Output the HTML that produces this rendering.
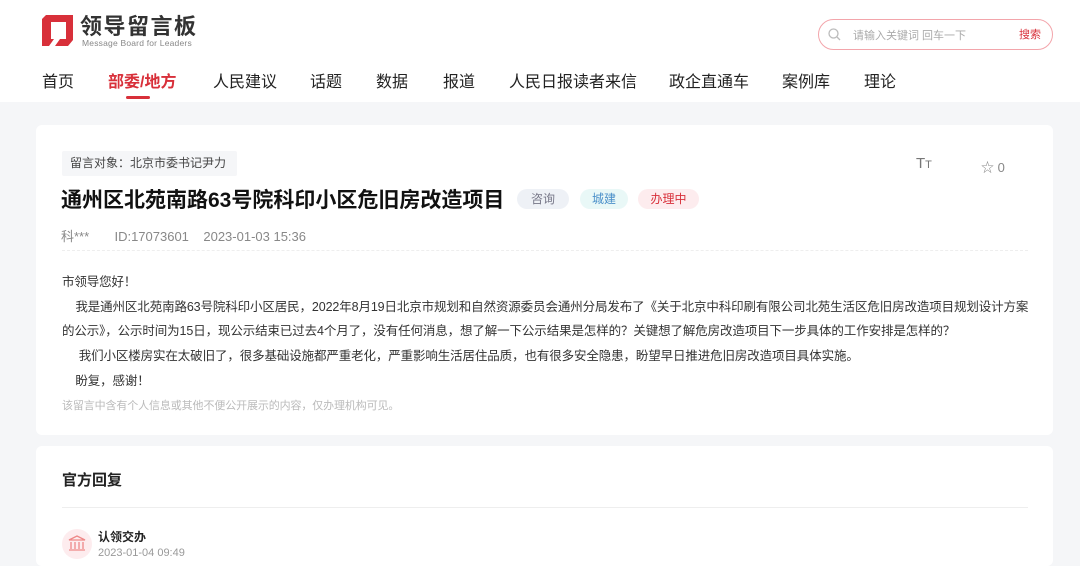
<!DOCTYPE html>
<html><head><meta charset="utf-8"><style>
*{margin:0;padding:0;box-sizing:border-box}
body{width:1080px;height:552px;overflow:hidden;background:#f5f6f8;font-family:"Liberation Sans","Noto Sans CJK SC",sans-serif;color:#333;position:relative}
.hdr{position:absolute;left:0;top:0;width:1080px;height:102px;background:#fff}
.a{position:absolute;white-space:nowrap}
.nav span{position:absolute;top:68px;font-size:16px;color:#222}
.card{position:absolute;left:36px;width:1017px;background:#fff;border-radius:6px}
.tag{position:absolute;top:189px;height:20px;border-radius:10px;font-size:12px;line-height:20px;text-align:center}
.p{position:absolute;left:62px;font-size:12.5px;color:#333;white-space:nowrap;letter-spacing:-0.12px}
</style></head><body>
<div class="hdr">
 <svg class="a" style="left:42px;top:15px" width="32" height="31" viewBox="0 0 32 31"><path d="M4 0H31V25L26 31H13L18 24H24V7H9V24H12L7 31H0V4Z" fill="#d8303a"/></svg>
 <div class="a" style="left:80px;top:9px;font-size:22px;font-weight:bold;color:#333;letter-spacing:1.5px">领导留言板</div>
 <div class="a" style="left:82px;top:38px;font-size:8.5px;color:#888;letter-spacing:0.2px">Message Board for Leaders</div>
 <div class="nav">
  <span style="left:42px">首页</span>
  <span style="left:108px;color:#d8303a;font-weight:bold">部委/地方</span>
  <span style="left:213px">人民建议</span>
  <span style="left:310px">话题</span>
  <span style="left:376px">数据</span>
  <span style="left:443px">报道</span>
  <span style="left:509px">人民日报读者来信</span>
  <span style="left:669px">政企直通车</span>
  <span style="left:782px">案例库</span>
  <span style="left:864px">理论</span>
 </div>
 <div class="a" style="left:126px;top:96px;width:24px;height:3px;background:#d8303a;border-radius:2px"></div>
 <div class="a" style="left:818px;top:19px;width:235px;height:31px;border:1px solid #f3a5ab;border-radius:16px"></div>
 <svg class="a" style="left:828px;top:28px" width="13" height="13" viewBox="0 0 13 13"><circle cx="5.5" cy="5.5" r="4.5" fill="none" stroke="#bbb" stroke-width="1.3"/><path d="M9 9L12 12" stroke="#bbb" stroke-width="1.3"/></svg>
 <div class="a" style="left:853px;top:27px;font-size:11px;color:#aaa">请输入关键词 回车一下</div>
 <div class="a" style="left:1019px;top:26px;font-size:11px;color:#d8303a">搜索</div>
</div>
<div class="card" style="top:125px;height:310px"></div>
<div class="a" style="left:62px;top:151px;width:175px;height:25px;background:#f5f6f8;border-radius:2px;font-size:12px;line-height:25px;padding-left:8px;color:#444">留言对象：北京市委书记尹力</div>
<div class="a" style="left:916px;top:155px;font-size:15px;color:#777">T<span style="font-size:11px">T</span></div>
<div class="a" style="left:981px;top:157px;font-size:13px;color:#888">☆ 0</div>
<div class="a" style="left:61px;top:184px;font-size:21px;font-weight:bold;color:#111">通州区北苑南路63号院科印小区危旧房改造项目</div>
<div class="tag" style="left:517px;width:52px;background:#eef1f6;color:#778">咨询</div>
<div class="tag" style="left:580px;width:48px;background:#e9f8f7;color:#4a8fc9">城建</div>
<div class="tag" style="left:638px;width:61px;background:#fdecee;color:#d8303a">办理中</div>
<div class="a" style="left:61px;top:226px;font-size:13px;color:#888">科***&nbsp;&nbsp;&nbsp;&nbsp;&nbsp;&nbsp;&nbsp;ID:17073601&nbsp;&nbsp;&nbsp;&nbsp;2023-01-03 15:36</div>
<div class="a" style="left:62px;top:250px;width:966px;border-top:1px dashed #eee"></div>
<div class="p" style="top:271px">市领导您好！</div>
<div class="p" style="top:296px">&nbsp;&nbsp;&nbsp;&nbsp;我是通州区北苑南路63号院科印小区居民，2022年8月19日北京市规划和自然资源委员会通州分局发布了《关于北京中科印刷有限公司北苑生活区危旧房改造项目规划设计方案</div>
<div class="p" style="top:320px">的公示》，公示时间为15日，现公示结束已过去4个月了，没有任何消息，想了解一下公示结果是怎样的？关键想了解危房改造项目下一步具体的工作安排是怎样的？</div>
<div class="p" style="top:345px">&nbsp;&nbsp;&nbsp;&nbsp;&nbsp;我们小区楼房实在太破旧了，很多基础设施都严重老化，严重影响生活居住品质，也有很多安全隐患，盼望早日推进危旧房改造项目具体实施。</div>
<div class="p" style="top:370px">&nbsp;&nbsp;&nbsp;&nbsp;盼复，感谢！</div>
<div class="p" style="top:397px;font-size:11px;color:#bbb">该留言中含有个人信息或其他不便公开展示的内容，仅办理机构可见。</div>
<div class="card" style="top:446px;height:120px"></div>
<div class="a" style="left:62px;top:469px;font-size:15px;font-weight:bold;color:#222">官方回复</div>
<div class="a" style="left:62px;top:507px;width:966px;border-top:1px solid #eee"></div>
<div class="a" style="left:62px;top:529px;width:30px;height:30px;border-radius:15px;background:#fdecee"></div>
<svg class="a" style="left:68px;top:535px" width="18" height="17" viewBox="0 0 18 17"><path d="M1 5L9 1L17 5Z" fill="none" stroke="#e88" stroke-width="1.3"/><path d="M3 7V14M7 7V14M11 7V14M15 7V14M1 15H17" stroke="#e88" stroke-width="1.3"/></svg>
<div class="a" style="left:98px;top:528px;font-size:12px;font-weight:bold;color:#222">认领交办</div>
<div class="a" style="left:98px;top:547px;font-size:11px;color:#999">2023-01-04 09:49</div>
</body></html>
